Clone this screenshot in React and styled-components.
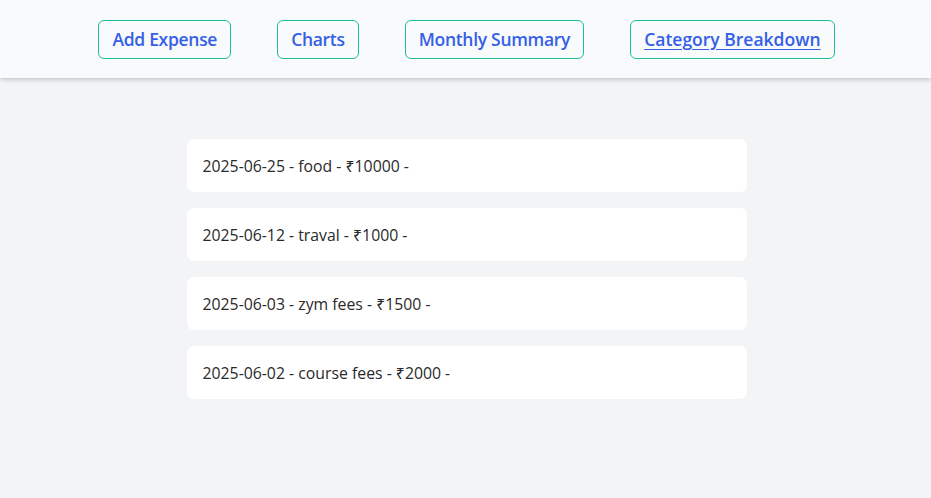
import React from "react";
import styled, { createGlobalStyle } from "styled-components";

const Global = createGlobalStyle`
  html, body { margin: 0; padding: 0; }
  body {
    background: #f3f4f6;
    font-family: "Open Sans", "Noto Sans", sans-serif;
    color: #222;
  }
`;

const Nav = styled.nav`
  height: 78px;
  background: #f8fafc;
  box-shadow: 0 2px 4px rgba(0, 0, 0, 0.18);
  display: flex;
  align-items: center;
  justify-content: center;
  gap: 46px;
  padding-left: 2px;
  box-sizing: border-box;
`;

const NavButton = styled.a`
  display: flex;
  align-items: center;
  height: 39px;
  box-sizing: border-box;
  padding: 0 13px;
  border: 1px solid #1fbf9c;
  border-radius: 6px;
  color: #3560e6;
  font-size: 17.5px;
  font-weight: 600;
  letter-spacing: ${(p) => (p.$active ? "0" : "-0.3px")};
  text-decoration: ${(p) => (p.$active ? "underline" : "none")};
  text-underline-offset: 3px;
  cursor: pointer;
`;

const List = styled.ul`
  list-style: none;
  margin: 61px auto 0;
  padding: 0 0 0 2px;
  width: 560px;
  display: flex;
  flex-direction: column;
  gap: 16px;
`;

const Item = styled.li`
  background: #fff;
  border-radius: 7px;
  height: 53px;
  display: flex;
  align-items: center;
  padding: 0 16px;
  font-size: 15.8px;
  color: #2a2a2a;
`;

const expenses = [
  { date: "2025-06-25", cat: "food", amt: 10000 },
  { date: "2025-06-12", cat: "traval", amt: 1000 },
  { date: "2025-06-03", cat: "zym fees", amt: 1500 },
  { date: "2025-06-02", cat: "course fees", amt: 2000 },
];

export default function App() {
  return (
    <>
      <Global />
      <Nav>
        <NavButton>Add Expense</NavButton>
        <NavButton>Charts</NavButton>
        <NavButton>Monthly Summary</NavButton>
        <NavButton $active>Category Breakdown</NavButton>
      </Nav>
      <List>
        {expenses.map((e) => (
          <Item key={e.date}>
            {e.date} - {e.cat} - ₹{e.amt} -
          </Item>
        ))}
      </List>
    </>
  );
}
